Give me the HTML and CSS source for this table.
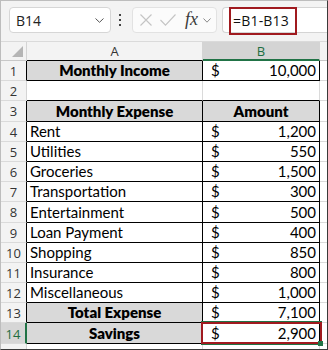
FILE: index.html
```html
<!DOCTYPE html>
<html>
<head>
<meta charset="utf-8">
<link rel="stylesheet" href="styles.css">
</head>
<body>
<div class="app">
  <div class="toolbar">
    <div class="namebox">
      <span>B14</span>
      <svg width="9" height="5" viewBox="0 0 9 5"><polyline points="0.5,0.5 4.5,4.3 8.5,0.5" fill="none" stroke="#555" stroke-width="1"/></svg>
    </div>
    <div class="dots"><i></i><i></i><i></i></div>
    <div class="fxbox">
      <svg class="ix" width="12" height="12" viewBox="0 0 12 12"><path d="M0.5 0.5L11.5 11.5M11.5 0.5L0.5 11.5" stroke="#c4c4c4" stroke-width="1.1" fill="none"/></svg>
      <svg class="ic" width="16" height="12" viewBox="0 0 16 12"><polyline points="0.5,6 5.5,11.2 15.5,0.5" fill="none" stroke="#c4c4c4" stroke-width="1.1"/></svg>
      <span class="fx">fx</span>
      <svg class="iv" width="8" height="5" viewBox="0 0 8 5"><polyline points="0.5,0.5 4,4.2 7.5,0.5" fill="none" stroke="#8a8a8a" stroke-width="1"/></svg>
    </div>
    <div class="formula">
      <span class="ftext">=B1-B13</span>
      <div class="hl"></div>
    </div>
  </div>
  <div class="sheet">
    <div class="h corner"><div class="tri"></div></div>
    <div class="h colA">A</div>
    <div class="h colB">B</div>
    <div class="h colC"></div>

    <div class="r k">1</div>
    <div class="c bk g">Monthly Income</div>
    <div class="c bk amt"><span>$</span><span>10,000</span></div>
    <div class="c cc"></div>

    <div class="r">2</div>
    <div class="c e"></div>
    <div class="c e"></div>
    <div class="c cc"></div>

    <div class="r k">3</div>
    <div class="c bk g">Monthly Expense</div>
    <div class="c bk g">Amount</div>
    <div class="c cc"></div>

    <div class="r k">4</div>
    <div class="c bk">Rent</div>
    <div class="c bk amt"><span>$</span><span>1,200</span></div>
    <div class="c cc"></div>

    <div class="r k">5</div>
    <div class="c bk">Utilities</div>
    <div class="c bk amt"><span>$</span><span>550</span></div>
    <div class="c cc"></div>

    <div class="r k">6</div>
    <div class="c bk">Groceries</div>
    <div class="c bk amt"><span>$</span><span>1,500</span></div>
    <div class="c cc"></div>

    <div class="r k">7</div>
    <div class="c bk">Transportation</div>
    <div class="c bk amt"><span>$</span><span>300</span></div>
    <div class="c cc"></div>

    <div class="r k">8</div>
    <div class="c bk">Entertainment</div>
    <div class="c bk amt"><span>$</span><span>500</span></div>
    <div class="c cc"></div>

    <div class="r k">9</div>
    <div class="c bk">Loan Payment</div>
    <div class="c bk amt"><span>$</span><span>400</span></div>
    <div class="c cc"></div>

    <div class="r k">10</div>
    <div class="c bk">Shopping</div>
    <div class="c bk amt"><span>$</span><span>850</span></div>
    <div class="c cc"></div>

    <div class="r k">11</div>
    <div class="c bk">Insurance</div>
    <div class="c bk amt"><span>$</span><span>800</span></div>
    <div class="c cc"></div>

    <div class="r k">12</div>
    <div class="c bk">Miscellaneous</div>
    <div class="c bk amt"><span>$</span><span>1,000</span></div>
    <div class="c cc"></div>

    <div class="r k">13</div>
    <div class="c bk g">Total Expense</div>
    <div class="c bk amt"><span>$</span><span>7,100</span></div>
    <div class="c cc"></div>

    <div class="r sel">14</div>
    <div class="c bk g">Savings</div>
    <div class="c bk amt selcell"><span>$</span><span>2,900</span><i class="handle"></i></div>
    <div class="c cc"></div>

    <div class="r"></div>
    <div class="c"></div>
    <div class="c"></div>
    <div class="c cc"></div>
  </div>
</div>
</body>
</html>
```

FILE: styles.css
```css
* { box-sizing: border-box; }
body { margin: 0; }
.app {
  width: 328px;
  height: 350px;
  border: 1px solid;
  border-color: #bdbdbd #3a3a3a #3a3a3a #bdbdbd;
  background: #f3f3f3;
  overflow: hidden;
  font-family: "Open Sans", "Noto Sans", sans-serif;
}
.toolbar {
  height: 40px;
  display: flex;
  align-items: flex-start;
  padding: 6px 0 0 8px;
}
.namebox {
  width: 102px;
  height: 26px;
  border: 1px solid #d6d6d6;
  border-radius: 4px;
  background: #fff;
  display: flex;
  align-items: center;
  justify-content: space-between;
  padding: 0 6px 0 6px;
  font-size: 14px;
  color: #222;
}
.dots {
  margin: 7px 0 0 8px;
  display: flex;
  flex-direction: column;
  gap: 3px;
}
.dots i {
  display: block;
  width: 2px;
  height: 2px;
  background: #444;
}
.fxbox {
  margin-left: 11px;
  width: 85px;
  height: 26px;
  border: 1px solid #e2e2e2;
  border-radius: 4px;
  background: #fbfbfb;
  display: flex;
  align-items: center;
}
.ix { margin-left: 7px; }
.ic { margin-left: 8px; }
.fx {
  margin-left: 9px;
  font-family: "Liberation Serif", serif;
  font-style: italic;
  font-size: 18px;
  line-height: 18px;
  color: #3a3a3a;
  margin-top: -2px;
}
.iv { margin-left: 5px; }
.formula {
  position: relative;
  margin-left: 5px;
  flex: 1;
  height: 26px;
  border: 1px solid #d4d4d4;
  border-right: none;
  border-radius: 4px 0 0 4px;
  background: #fff;
  display: flex;
  align-items: center;
  padding-left: 10px;
  font-size: 14px;
  letter-spacing: 0.2px;
  color: #111;
}
.hl {
  position: absolute;
  left: 6px;
  top: -1px;
  width: 68px;
  height: 28px;
  border: 2px solid #a01a1f;
}
.sheet {
  display: grid;
  grid-template-columns: 26px 176px 117px 7px;
  grid-template-rows: 19px repeat(15, 20.2px);
  border-top: 1px solid #dadada;
  background: #fff;
  font-family: Lato, "Open Sans", sans-serif;
}
.h {
  background: #f3f3f3;
  color: #333;
  font-family: "Open Sans", "Noto Sans", sans-serif;
  font-size: 13px;
  display: flex;
  align-items: center;
  justify-content: center;
  border-right: 1px solid #d4d4d4;
  border-bottom: 1px solid #c8c8c8;
}
.corner {
  justify-content: flex-end;
  align-items: flex-end;
  padding: 0 3px 3px 0;
}
.tri {
  width: 11px;
  height: 11px;
  background: #b5b5b5;
  clip-path: polygon(100% 0, 100% 100%, 0 100%);
}
.colA { border-bottom-color: #000; }
.colB {
  background: #d4d4d4;
  color: #1e6e42;
  border-bottom: 2px solid #217346;
}
.colC { border-right: none; }
.r {
  background: #f3f3f3;
  color: #333;
  font-family: "Open Sans", "Noto Sans", sans-serif;
  font-size: 13px;
  display: flex;
  align-items: center;
  justify-content: center;
  padding-top: 1px;
  border-right: 1px solid #d4d4d4;
  border-bottom: 1px solid #dadada;
}
.r.k { border-right-color: #000; }
.r.sel {
  background: #d6d6d6;
  color: #1e6e42;
  border-right: 2px solid #217346;
}
.c {
  border-right: 1px solid #dadada;
  border-bottom: 1px solid #dadada;
  display: flex;
  align-items: flex-end;
  padding: 0 3px 1px 3px;
  font-size: 15px;
  line-height: 18px;
  color: #000;
  white-space: nowrap;
  overflow: hidden;
}
.c.e { border-bottom-color: #000; }
.c.cc { border-right: none; }
.bk {
  border-right-color: #000;
  border-bottom-color: #000;
}
.g {
  background: #d9d9d9;
  font-weight: 800;
  justify-content: center;
}
.amt {
  justify-content: space-between;
  padding-left: 8px;
  padding-right: 3px;
}
.selcell {
  position: relative;
  overflow: visible;
}
.selcell::before {
  content: "";
  position: absolute;
  left: -2px;
  right: -3px;
  top: -2px;
  bottom: -2px;
  border: 2px solid #217346;
  z-index: 1;
}
.selcell::after {
  content: "";
  position: absolute;
  left: -2px;
  right: -3px;
  top: -1px;
  bottom: -1px;
  border: 2px solid #a01a1f;
  z-index: 2;
}
.handle {
  position: absolute;
  right: -4px;
  bottom: -3px;
  width: 5px;
  height: 5px;
  background: #217346;
  z-index: 3;
}
```
